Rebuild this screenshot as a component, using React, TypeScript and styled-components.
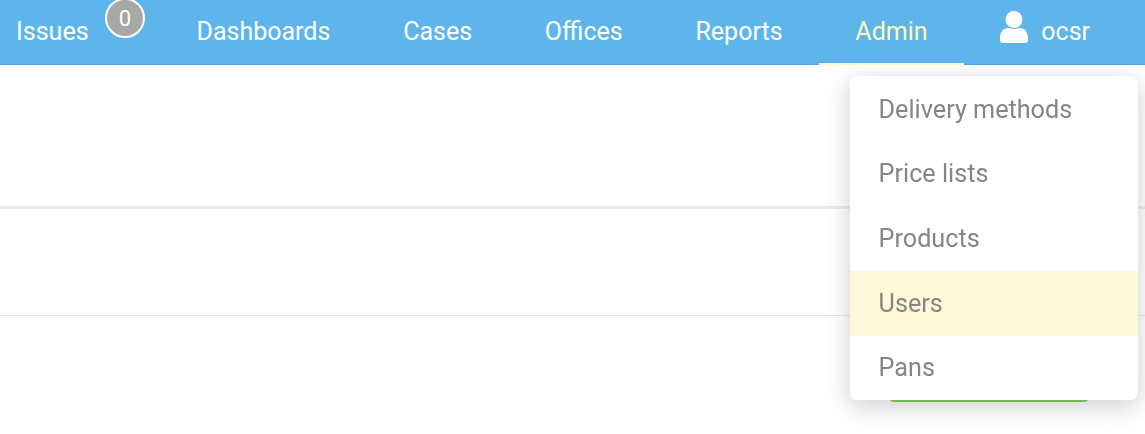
import styled, { createGlobalStyle } from "styled-components";

const GlobalStyle = createGlobalStyle`
    html, body {
        margin: 0;
        padding: 0;
        height: 100%;
        overflow: hidden;
        background: #fff;
        font-family: Roboto, "Liberation Sans", sans-serif;
    }
`

const Navbar = styled.nav`
    display: flex;
    align-items: stretch;
    height: 65px;
    box-sizing: border-box;
    background: #5eb5ec;
    border-bottom: 1px solid #55a5e2;
`

const NavItem = styled.div<{ $active?: boolean; $first?: boolean }>`
    position: relative;
    display: flex;
    align-items: center;
    height: 65px;
    box-sizing: border-box;
    padding-left: ${(props) => props.$first ? "16px" : "36.4px"};
    padding-right: ${(props) => props.$first ? "71.6px" : "36.4px"};
    font-size: 25px;
    color: ${(props) => props.$active ? "#fff9b8" : "#fff"};
    border-bottom: 2px solid ${(props) => props.$active ? "#fdf8c0" : "transparent"};
`

const Badge = styled.span`
    position: absolute;
    top: -2px;
    left: 105px;
    width: 40px;
    height: 40px;
    box-sizing: border-box;
    display: flex;
    align-items: center;
    justify-content: center;
    border: 2px solid #fff;
    border-radius: 50%;
    background: #a8a8a8;
    color: #fff;
    font-size: 22px;
`

const UserIcon = styled.svg`
    width: 28px;
    height: 32px;
    margin-right: 13px;
    margin-bottom: 10px;
    fill: #fff;
`

const TopSection = styled.div`
    height: 144px;
    box-sizing: border-box;
    border-bottom: 3px solid #ebebeb;
`

const MiddleSection = styled.div`
    height: 107px;
    box-sizing: border-box;
    border-bottom: 1px solid #e6e6e6;
`

const ActionRow = styled.div`
    display: flex;
    justify-content: flex-end;
    padding: 44px 57px 0 0;
`

const GreenButton = styled.div`
    width: 198px;
    height: 42px;
    border-radius: 4px;
    background: #84d25e;
`

const Menu = styled.ul`
    position: absolute;
    top: 76px;
    left: 850px;
    width: 288px;
    margin: 0;
    padding: 0.8px 0 0;
    list-style: none;
    overflow: hidden;
    background: #fff;
    border-radius: 8px;
    box-shadow: 0 6px 24px rgba(0, 0, 0, 0.2);
    will-change: transform;
`

const MenuItem = styled.li<{ $hover?: boolean }>`
    display: flex;
    align-items: center;
    height: 64.7px;
    padding-left: 28.6px;
    font-size: 25.2px;
    color: #858585;
    background: ${(props) => props.$hover ? "#fef9d8" : "#fff"};
`

const menuLinks = ["Delivery methods", "Price lists", "Products", "Users", "Pans"];

export default function App() {
    return (
        <>
            <GlobalStyle />
            <Navbar>
                <NavItem $first>
                    Issues
                    <Badge>0</Badge>
                </NavItem>
                <NavItem>Dashboards</NavItem>
                <NavItem>Cases</NavItem>
                <NavItem>Offices</NavItem>
                <NavItem>Reports</NavItem>
                <NavItem $active>Admin</NavItem>
                <NavItem>
                    <UserIcon viewBox="0 0 28 32">
                        <circle cx="14" cy="8.5" r="8.500" />
                        <path d="M0 27c0-6 3.500-10 8-10 2 0 3.500 1 6 1s4-1 6-1c4.500 0 8 4 8 10v2c0 2-1 3-3 3H3c-2 0-3-1-3-3z" />
                    </UserIcon>
                    ocsr
                </NavItem>
            </Navbar>
            <TopSection />
            <MiddleSection />
            <ActionRow>
                <GreenButton />
            </ActionRow>
            <Menu>
                {menuLinks.map((link) => (
                    <MenuItem key={link} $hover={link === "Users"}>{link}</MenuItem>
                ))}
            </Menu>
        </>
    )
}
